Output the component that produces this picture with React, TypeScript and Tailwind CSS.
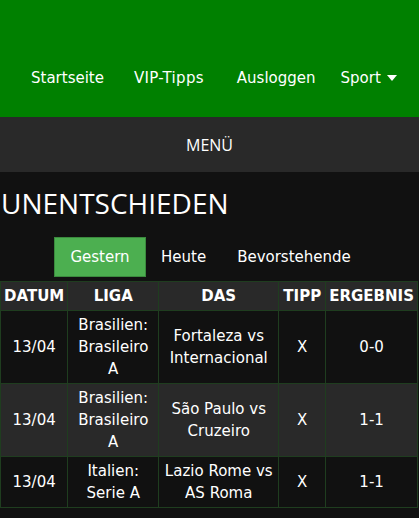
import React from 'react';

const rows = [
  { date: '13/04', league: 'Brasilien: Brasileiro A', match: 'Fortaleza vs Internacional', tip: 'X', result: '0-0' },
  { date: '13/04', league: 'Brasilien: Brasileiro A', match: 'São Paulo vs Cruzeiro', tip: 'X', result: '1-1' },
  { date: '13/04', league: 'Italien: Serie A', match: 'Lazio Rome vs AS Roma', tip: 'X', result: '1-1' },
];

const App: React.FC = () => {
  return (
    <div className="min-h-[518px] bg-[#111111] text-white font-['DejaVu_Sans',sans-serif] text-[15px] leading-[22px]">
      {/* Header */}
      <header className="h-[117px] bg-[#008000] flex items-center pl-[31px] pt-[38px]">
        <a className="mr-[30px] text-white">Startseite</a>
        <a className="mr-[33px] text-white tracking-[0.3px]">VIP-Tipps</a>
        <a className="mr-[25px] text-white">Ausloggen</a>
        <a className="flex items-center gap-[6px] text-white">
          Sport
          <svg width="10" height="6" viewBox="0 0 10 6" className="mt-[1px]">
            <path d="M0 0 L10 0 L5 6 Z" fill="white" />
          </svg>
        </a>
      </header>

      {/* Menu bar */}
      <div className="h-[55px] bg-[#292929] flex items-center justify-center font-['Open_Sans',sans-serif] text-[16px]">
        MENÜ
      </div>

      {/* Title */}
      <h1 className="pl-[1px] pt-[12px] font-['Open_Sans',sans-serif] text-[28px] leading-[38px]">UNENTSCHIEDEN</h1>

      {/* Tabs */}
      <div className="flex pl-[54px] mt-[15px]">
        <button className="w-[92px] py-2 bg-[#4caf50] border border-[#3b8a3e] text-white">Gestern</button>
        <button className="pl-[14px] pr-[14px] py-2 border border-transparent text-white">Heute</button>
        <button className="pl-[15px] pr-[15px] py-2 border border-transparent text-white">Bevorstehende</button>
      </div>

      {/* Table */}
      <table className="mt-[4px] w-[418px] border-collapse text-center">
        <thead>
          <tr className="bg-[#292929]">
            <th className="w-[67px] border border-[#1f3d1f] px-[3px] py-[3px] font-bold">DATUM</th>
            <th className="w-[91px] border border-[#1f3d1f] px-[3px] py-[3px] font-bold">LIGA</th>
            <th className="w-[120px] border border-[#1f3d1f] px-[3px] py-[3px] font-bold">DAS</th>
            <th className="w-[47px] border border-[#1f3d1f] px-[1px] py-[3px] font-bold">TIPP</th>
            <th className="border border-[#1f3d1f] px-[1px] py-[3px] font-bold">ERGEBNIS</th>
          </tr>
        </thead>
        <tbody>
          {rows.map((r, i) => (
            <tr key={i} className={i % 2 === 1 ? 'bg-[#292929]' : 'bg-[#111111]'}>
              <td className="border border-[#1f3d1f] px-[3px] py-[3px]">{r.date}</td>
              <td className="border border-[#1f3d1f] px-[3px] py-[3px]">{r.league}</td>
              <td className="border border-[#1f3d1f] px-[3px] py-[3px]">{r.match}</td>
              <td className="border border-[#1f3d1f] px-[3px] py-[3px]">{r.tip}</td>
              <td className="border border-[#1f3d1f] px-[3px] py-[3px]">{r.result}</td>
            </tr>
          ))}
        </tbody>
      </table>
    </div>
  );
};

export default App;
